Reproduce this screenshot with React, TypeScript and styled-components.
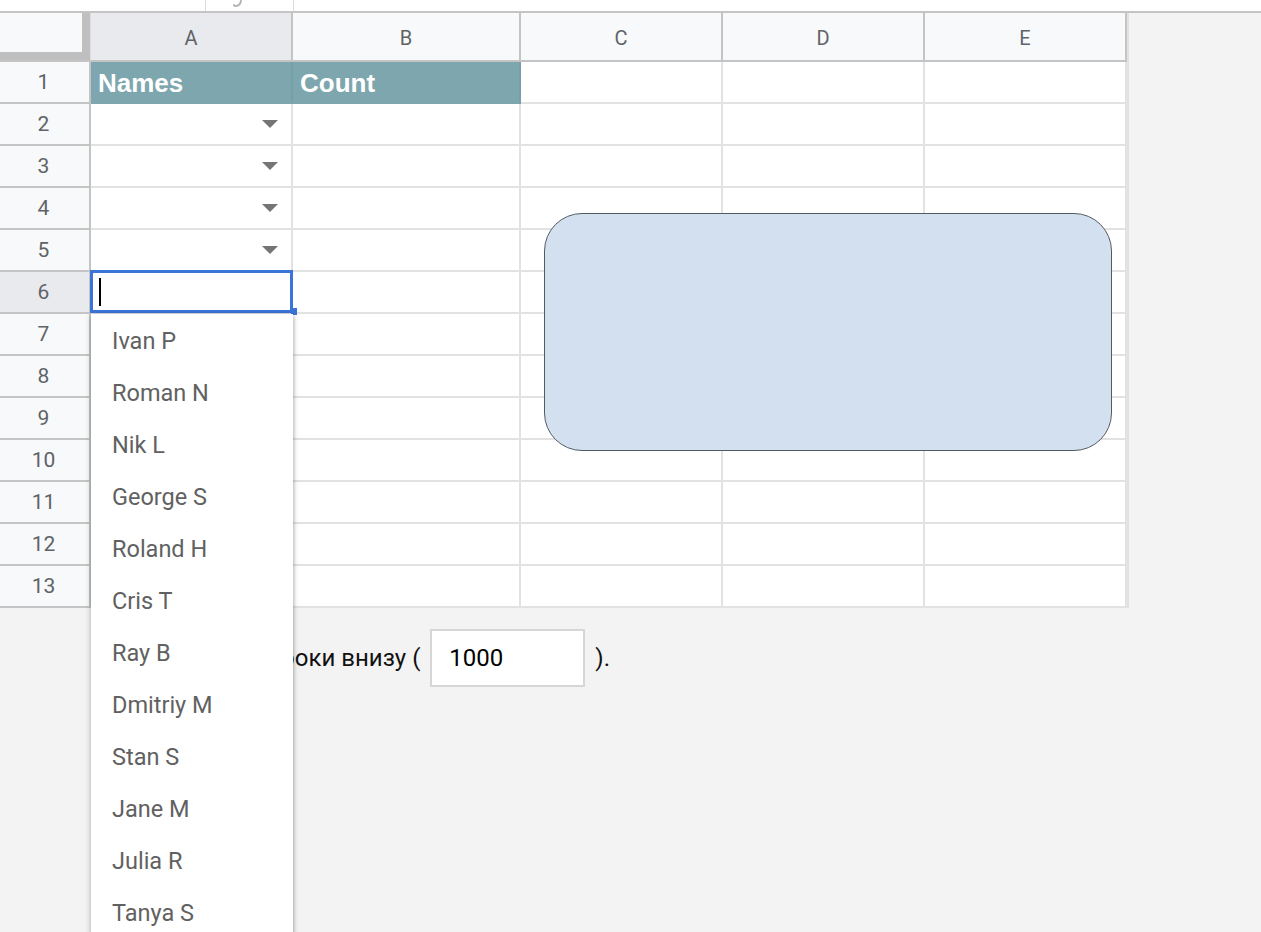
import React from 'react';
import styled, { createGlobalStyle } from 'styled-components';

const GlobalStyle = createGlobalStyle`
  html, body {
    margin: 0;
    padding: 0;
    background: #f3f3f3;
  }
  * {
    box-sizing: border-box;
  }
`;

const COLUMNS = ['A', 'B', 'C', 'D', 'E'];
const ROW_COUNT = 13;
const NAMES = [
  'Ivan P',
  'Roman N',
  'Nik L',
  'George S',
  'Roland H',
  'Cris T',
  'Ray B',
  'Dmitriy M',
  'Stan S',
  'Jane M',
  'Julia R',
  'Tanya S',
];

const Page = styled.div`
  position: relative;
  width: 1261px;
  height: 932px;
  overflow: hidden;
  background: #f3f3f3;
  font-family: Roboto, 'Liberation Sans', Arial, sans-serif;
`;

const FormulaBar = styled.div`
  display: flex;
  height: 13px;
  background: #ffffff;
  border-bottom: 2px solid #c4c4c4;
  overflow: hidden;
`;

const NameBox = styled.div`
  width: 206px;
  border-right: 1px solid #dadada;
`;

const FxBox = styled.div`
  width: 88px;
  border-right: 1px solid #dadada;
  display: flex;
  align-items: flex-start;
  padding-left: 25px;
`;

const Sheet = styled.div`
  display: grid;
  grid-template-columns: 91px 202px 228px 202px 202px 202px;
  grid-template-rows: 49px repeat(${ROW_COUNT}, 42px);
  width: 1129px;
  border-right: 2px solid #e2e2e2;
  background: #ffffff;
`;

const Corner = styled.div`
  background: #f8f9fa;
  border-right: 1px solid #dcdcdc;
  border-bottom: 2px solid #c4c4c4;
  box-shadow: inset -8px -8px 0 #bfbfbf;
`;

const ColHeader = styled.div<{ $active?: boolean }>`
  display: flex;
  align-items: center;
  justify-content: center;
  background: ${(p) => (p.$active ? '#e8eaed' : '#f8f9fa')};
  border-right: 2px solid #c4c4c4;
  border-bottom: 2px solid #c4c4c4;
  color: #5f6368;
  font-size: 20px;
  padding-top: 2px;
`;

const RowHeader = styled.div<{ $active?: boolean }>`
  display: flex;
  align-items: center;
  justify-content: center;
  background: ${(p) => (p.$active ? '#e8eaed' : '#f8f9fa')};
  border-right: 2px solid #c4c4c4;
  border-bottom: 2px solid #c4c4c4;
  color: #5f6368;
  font-size: 21px;
  padding-right: 2px;
`;

const Cell = styled.div`
  position: relative;
  display: flex;
  align-items: center;
  background: #ffffff;
  border-right: 2px solid #e2e2e2;
  border-bottom: 2px solid #e2e2e2;
`;

const TitleCell = styled(Cell)`
  background: #7ea6ae;
  border-right: 2px solid #76a0a8;
  border-bottom: 2px solid #7ea6ae;
  padding: 3px 0 0 7px;
  color: #ffffff;
  font-family: 'Liberation Sans', Arial, sans-serif;
  font-weight: bold;
  font-size: 26px;
`;

const DropCell = styled(Cell)`
  justify-content: flex-end;
  padding-right: 13px;
`;

const SelectedCell = styled(Cell)`
  z-index: 2;
  padding-left: 8px;
`;

const SelectionFrame = styled.span`
  position: absolute;
  left: -1px;
  top: -2px;
  right: -2px;
  bottom: -1px;
  border: 3px solid #3b74d9;
  pointer-events: none;
`;

const Caret = styled.span`
  width: 2px;
  height: 28px;
  background: #000000;
`;

const FillHandle = styled.span`
  position: absolute;
  right: -6px;
  bottom: -3px;
  width: 6px;
  height: 7px;
  background: #3b74d9;
`;

const Shape = styled.div`
  position: absolute;
  left: 544px;
  top: 213px;
  width: 568px;
  height: 238px;
  background: #d3e0f0;
  border: 1.5px solid #555a60;
  border-radius: 38px;
`;

const Footer = styled.div`
  display: flex;
  align-items: center;
  gap: 10px;
  padding: 21px 0 0 141px;
  font-size: 24px;
  color: #111111;
  white-space: nowrap;
`;

const CountInput = styled.div`
  width: 155px;
  height: 58px;
  display: flex;
  align-items: center;
  padding-left: 17px;
  background: #ffffff;
  border: 2px solid #d6d6d6;
  font-size: 24px;
  color: #000000;
`;

const Dropdown = styled.div`
  position: absolute;
  left: 91px;
  top: 314px;
  width: 202px;
  padding-top: 1px;
  background: #ffffff;
  box-shadow: 0 2px 6px rgba(0, 0, 0, 0.28), 1px 0 3px rgba(0, 0, 0, 0.12);
  z-index: 3;
`;

const Option = styled.div`
  height: 52px;
  display: flex;
  align-items: center;
  padding-left: 21px;
  font-size: 23.5px;
  color: #616161;
`;

const DropArrow = () => (
  <svg width="16" height="8" viewBox="0 0 16 8">
    <path d="M0 0 L16 0 L8 8 Z" fill="#757575" />
  </svg>
);

// only the lower tail of the formula-bar fx icon shows above the grid
const FxTail = () => (
  <svg width="14" height="8" viewBox="0 0 14 8">
    <path
      d="M10 0 C10 3 8 6 5 6 C4 6 3 5.5 3 5"
      fill="none"
      stroke="#b5b5b5"
      strokeWidth="2"
      strokeLinecap="round"
    />
  </svg>
);

export default function App() {
  const rows = Array.from({ length: ROW_COUNT }, (_, i) => i + 1);

  const renderCell = (row: number, col: string) => {
    const key = `${col}${row}`;
    if (row === 1 && col === 'A') return <TitleCell key={key}>Names</TitleCell>;
    if (row === 1 && col === 'B') return <TitleCell key={key}>Count</TitleCell>;
    if (col === 'A' && row >= 2 && row <= 5)
      return (
        <DropCell key={key}>
          <DropArrow />
        </DropCell>
      );
    if (col === 'A' && row === 6)
      return (
        <SelectedCell key={key}>
          <Caret />
          <SelectionFrame />
          <FillHandle />
        </SelectedCell>
      );
    return <Cell key={key} />;
  };

  return (
    <Page>
      <GlobalStyle />
      <FormulaBar>
        <NameBox />
        <FxBox>
          <FxTail />
        </FxBox>
      </FormulaBar>
      <Sheet>
        <Corner />
        {COLUMNS.map((c) => (
          <ColHeader key={c} $active={c === 'A'}>
            {c}
          </ColHeader>
        ))}
        {rows.map((r) => (
          <React.Fragment key={r}>
            <RowHeader $active={r === 6}>{r}</RowHeader>
            {COLUMNS.map((c) => renderCell(r, c))}
          </React.Fragment>
        ))}
      </Sheet>
      <Footer>
        <span>Добавить строки внизу (</span>
        <CountInput>1000</CountInput>
        <span>).</span>
      </Footer>
      <Shape />
      <Dropdown>
        {NAMES.map((n) => (
          <Option key={n}>{n}</Option>
        ))}
      </Dropdown>
    </Page>
  );
}
